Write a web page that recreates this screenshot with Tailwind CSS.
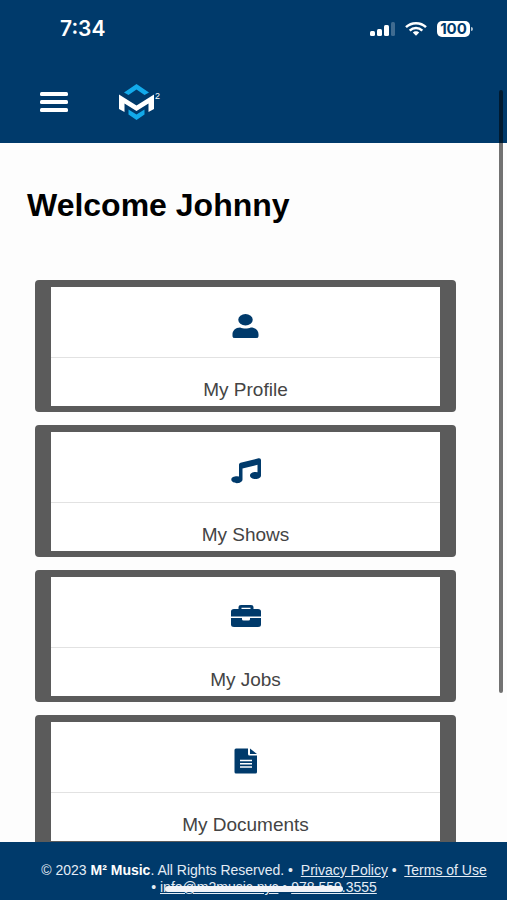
<!DOCTYPE html>
<html lang="en">
<head>
  <meta charset="UTF-8" />
  <meta name="viewport" content="width=device-width, initial-scale=1.0"/>
  <title>M² Music</title>
  <script src="https://cdn.jsdelivr.net/npm/@tailwindcss/browser@4"></script>
</head>
<body class="relative flex h-screen flex-col overflow-hidden bg-[#fdfdfd] font-['Liberation_Sans',Arial,sans-serif]">

  <header class="shrink-0 bg-[#003a6b] text-white">
    <!-- Status bar -->
    <div class="flex h-16 items-center justify-between pr-[34px] pb-[6px] pl-[60px]">
      <span class="font-['Inter',sans-serif] text-[21px] leading-6 font-semibold">7:34</span>
      <div class="flex items-center gap-[10px]">
        <svg width="25" height="14" viewBox="0 0 25 14" fill="#fff" aria-hidden="true">
          <rect x="0" y="9" width="5" height="5" rx="1.500"/>
          <rect x="7" y="7" width="5" height="7" rx="1.500"/>
          <rect x="14" y="3" width="5" height="11" rx="1.500"/>
          <rect x="21" y="0" width="4" height="14" rx="1.500" opacity=".25"/>
        </svg>
        <svg width="22" height="14" viewBox="0 0 22 14" fill="none" stroke="#fff" stroke-width="2.5" aria-hidden="true">
          <path d="M1 5.200C6.500 0 15.500 0 21 5.200"/>
          <path d="M4.700 8.600C8.300 5.200 13.700 5.200 17.300 8.600"/>
          <path d="M11 9.300c-1.300 0-2.400.5-3.200 1.300L11 13.700l3.200-3.100c-.8-.8-1.900-1.300-3.200-1.300z" fill="#fff" stroke="none"/>
        </svg>
        <div class="flex items-center gap-px">
          <span class="flex h-4 w-[33px] items-center justify-center rounded-[5px] bg-white font-['Inter',sans-serif] text-[15px] leading-4 font-bold text-[#003a6b]">100</span>
          <span class="h-1 w-[2px] rounded-r bg-white/70"></span>
        </div>
      </div>
    </div>
    <!-- Navigation -->
    <nav class="flex h-[79px] items-center gap-[51px] pb-[3px] pl-[39px]">
      <button type="button" aria-label="Menu">
        <svg width="29" height="22" viewBox="0 0 29 22" fill="#fff">
          <rect x="1" y="1" width="28" height="4" rx="1.500"/>
          <rect x="1" y="9" width="28" height="4" rx="1.500"/>
          <rect x="1" y="17" width="28" height="4" rx="1.500"/>
        </svg>
      </button>
      <a href="#" aria-label="M² Music home" class="relative block">
        <svg width="42" height="36" viewBox="0 0 42 36">
          <path d="M5 8.500 17.500 0 30 8.500 25.500 11 17.500 5.500 9.500 11z" fill="#12aaea"/>
          <path d="M0 10.500 17.500 21.500 35 10.500V25L29.500 28V19.500L17.500 27 5.500 19.500V28L0 25z" fill="#fff"/>
          <path d="M9.500 25.500 17.500 30.500 25.500 25.500V30.500L17.500 36 9.500 30.500z" fill="#12aaea"/>
        </svg>
        <span class="absolute top-2 left-[36px] text-[9px] leading-[9px]">2</span>
      </a>
    </nav>
  </header>

  <main class="min-h-0 flex-1 overflow-hidden pr-[51px] pl-[27px]">
    <h1 class="mt-11 text-[32px] leading-9 font-bold text-black">Welcome Johnny</h1>

    <div class="mt-[57px] ml-2 flex flex-col gap-[13px] text-[19px] leading-6 text-[#444]">
      <a href="#" class="block rounded border-x-[16px] border-t-[7px] border-b-[6px] border-[#5b5b5b] bg-white text-center">
        <span class="flex h-[71px] items-center justify-center border-b border-[#e2e2e2] pt-2">
          <svg width="27" height="26" viewBox="0 0 28 26" fill="#003a6b" aria-hidden="true">
            <ellipse cx="14" cy="6.500" rx="7.500" ry="6"/>
            <path d="M8.500 14.500C10 15.200 12 15.700 14 15.700s4-.5 5.500-1.200C24.500 14.500 27.500 18 27.500 21.500V23.500Q27.500 25.500 25 25.500H3Q.5 25.500 .5 23.500V21.500C.5 18 3.500 14.500 8.500 14.500z"/>
          </svg>
        </span>
        <span class="block h-12 pt-5">My Profile</span>
      </a>

      <a href="#" class="block rounded border-x-[16px] border-t-[7px] border-b-[6px] border-[#5b5b5b] bg-white text-center">
        <span class="flex h-[71px] items-center justify-center border-b border-[#e2e2e2] pt-2">
          <svg width="30" height="26" viewBox="0 0 30 26" fill="#003a6b" aria-hidden="true">
            <path d="M8 6.500Q8 5.200 9.500 4.700L27.500.3Q30 0 30 2V17.500C30 19.500 27.500 21 24.500 21S19 19.500 19 17.500 21.500 14 24.500 14Q25.700 14 26.500 14.300V6.800L11.500 10.500V21.500C11.500 23.500 9 25.200 6 25.200S.3 23.500 .3 21.500 3 18.300 6 18.300Q7.200 18.300 8 18.600z"/>
          </svg>
        </span>
        <span class="block h-12 pt-5">My Shows</span>
      </a>

      <a href="#" class="block rounded border-x-[16px] border-t-[7px] border-b-[6px] border-[#5b5b5b] bg-white text-center">
        <span class="flex h-[71px] items-center justify-center border-b border-[#e2e2e2] pt-2">
          <svg width="30" height="22" viewBox="0 0 30 22" fill="#003a6b" aria-hidden="true">
            <path fill-rule="evenodd" d="M7.500 4V2Q7.500 0 10 0H20Q22.500 0 22.500 2V4H27Q30 4 30 6.500V11.500H0V6.500Q0 4 3 4zM10.500 4H19.500V2.700H10.500z"/>
            <path d="M0 13H11V14.300Q11 15.500 12.500 15.500H17.500Q19 15.500 19 14.300V13H30V19.500Q30 22 27 22H3Q0 22 0 19.500z"/>
          </svg>
        </span>
        <span class="block h-12 pt-5">My Jobs</span>
      </a>

      <a href="#" class="block rounded border-x-[16px] border-t-[7px] border-b-[6px] border-[#5b5b5b] bg-white text-center">
        <span class="flex h-[71px] items-center justify-center border-b border-[#e2e2e2] pt-2">
          <svg width="24" height="26" viewBox="0 0 24 26" fill="#003a6b" aria-hidden="true">
            <path d="M2 .5H14V6Q14 7.500 15.500 7.500H23V24Q23 25.500 21.500 25.500H2Q.5 25.500 .5 24V2Q.5 .5 2 .5z"/>
            <path d="M16 .5 23 6H16z"/>
            <path d="M6 12.500H18M6 15.800H18M6 19H18" stroke="#fff" stroke-width="1.400"/>
          </svg>
        </span>
        <span class="block h-12 pt-5">My Documents</span>
      </a>
    </div>
  </main>

  <footer class="relative shrink-0 bg-[#003a6b] pt-5 pb-1 pl-[21px] text-center text-[14px] leading-[17px] whitespace-nowrap text-[#e4ecf5]">
    <p>© 2023 <b class="text-white">M² Music</b>. All Rights Reserved. •&nbsp; <a href="#" class="underline">Privacy Policy</a> •&nbsp; <a href="#" class="underline">Terms of Use</a></p>
    <p>• <a href="mailto:info@m2music.nyc" class="underline">info@m2music.nyc</a> • <a href="tel:9785593555" class="underline">978.559.3555</a></p>
    <!-- Home indicator -->
    <div class="absolute bottom-2 left-1/2 h-[6px] w-[178px] -translate-x-1/2 rounded-full bg-[#f2f4f8]"></div>
  </footer>

  <!-- Scroll indicator -->
  <div class="absolute top-[10%] right-1 h-[67%] w-1 rounded-full bg-black/55"></div>
</body>
</html>
